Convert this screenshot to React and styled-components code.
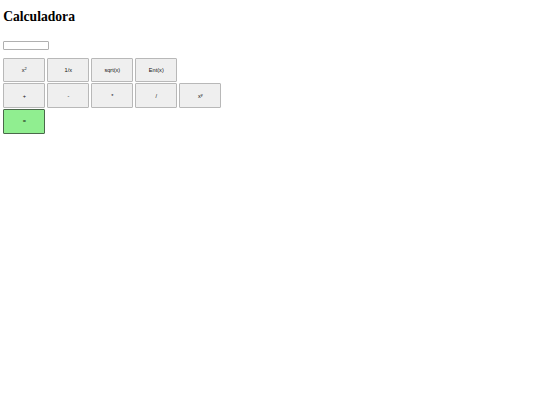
import React, { useState } from "react";
import styled, { createGlobalStyle } from "styled-components";

const GlobalStyle = createGlobalStyle`
  body {
    margin: 0;
    background: #fff;
    font-family: "Liberation Serif", serif;
  }
`;

const Page = styled.div`
  padding: 0 3.2px;
`;

const Title = styled.h1`
  font-family: "Liberation Serif", "Times New Roman", serif;
  font-size: 13.6px;
  font-weight: bold;
  margin: 9px 0 0;
  line-height: 15.5px;
  color: #000;
`;

const Display = styled.input`
  display: block;
  box-sizing: border-box;
  width: 46px;
  height: 8.5px;
  margin: 16.5px 0 0;
  padding: 0;
  border: 1px solid #b0b0b0;
  border-radius: 1px;
  font-size: 5px;
  background: #fff;
`;

const Keypad = styled.div`
  display: flex;
  flex-direction: column;
  gap: 1.2px;
  margin-top: 8px;
`;

const Row = styled.div`
  display: flex;
  gap: 1.7px;
`;

const Key = styled.button`
  box-sizing: border-box;
  width: 42.3px;
  height: 24.6px;
  padding: 0;
  background: ${(p) => (p.$equals ? "#90ee90" : "#efefef")};
  border: ${(p) => (p.$equals ? "1.3px solid #4a684a" : "1px solid #b8b8b8")};
  border-radius: 1px;
  font-family: "Liberation Sans", Arial, sans-serif;
  font-size: 5.6px;
  color: #111;
  cursor: pointer;

  sup {
    font-size: 4px;
    vertical-align: 2px;
    line-height: 0;
  }
`;

const App = () => {
  const [value, setValue] = useState("");

  const rows = [
    [
      { id: "sq", label: <>x<sup>2</sup></> },
      { id: "inv", label: "1/x" },
      { id: "sqrt", label: "sqrt(x)" },
      { id: "ent", label: "Ent(x)" },
    ],
    [
      { id: "add", label: "+" },
      { id: "sub", label: "-" },
      { id: "mul", label: "*" },
      { id: "div", label: "/" },
      { id: "pow", label: <>x<sup>y</sup></> },
    ],
    [{ id: "eq", label: "=", equals: true }],
  ];

  return (
    <Page>
      <GlobalStyle />
      <Title>Calculadora</Title>
      <Display value={value} onChange={(e) => setValue(e.target.value)} />
      <Keypad>
        {rows.map((row, i) => (
          <Row key={i}>
            {row.map((k) => (
              <Key key={k.id} $equals={k.equals}>
                {k.label}
              </Key>
            ))}
          </Row>
        ))}
      </Keypad>
    </Page>
  );
};

export default App;
